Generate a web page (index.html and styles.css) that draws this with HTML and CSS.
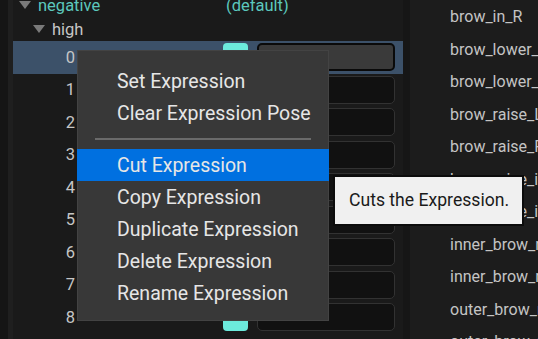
FILE: index.html
```html
<!DOCTYPE html>
<html>
<head>
<meta charset="utf-8">
<link rel="stylesheet" href="styles.css">
</head>
<body>
<div class="app">
  <div class="strip-a"></div>
  <div class="strip-b"></div>
  <div class="tree">
    <div class="head-row neg">
      <span class="tri tri-a"></span>
      <span class="neg-label">negative</span>
      <span class="neg-default">(default)</span>
    </div>
    <div class="head-row high">
      <span class="tri tri-b"></span>
      <span class="high-label">high</span>
    </div>
    <div class="row sel"><span class="num">0</span><span class="swatch"></span><span class="field"></span></div>
    <div class="row"><span class="num">1</span><span class="swatch"></span><span class="field"></span></div>
    <div class="row"><span class="num">2</span><span class="swatch"></span><span class="field"></span></div>
    <div class="row"><span class="num">3</span><span class="swatch"></span><span class="field"></span></div>
    <div class="row"><span class="num">4</span><span class="swatch"></span><span class="field"></span></div>
    <div class="row"><span class="num">5</span><span class="swatch"></span><span class="field"></span></div>
    <div class="row"><span class="num">6</span><span class="swatch"></span><span class="field"></span></div>
    <div class="row"><span class="num">7</span><span class="swatch"></span><span class="field"></span></div>
    <div class="row"><span class="num">8</span><span class="swatch"></span><span class="field"></span></div>
    <div class="head-row next"><span class="tri tri-c"></span></div>
  </div>
  <div class="divider"></div>
  <div class="list">
    <div class="item">brow_in_R</div>
    <div class="item">brow_lower_L</div>
    <div class="item">brow_lower_R</div>
    <div class="item">brow_raise_L</div>
    <div class="item">brow_raise_R</div>
    <div class="item">brow_raise_in_L</div>
    <div class="item">brow_raise_in_R</div>
    <div class="item">inner_brow_raise_L</div>
    <div class="item">inner_brow_raise_R</div>
    <div class="item">outer_brow_raise_L</div>
    <div class="item">outer_brow_raise_R</div>
  </div>

  <div class="menu">
    <div class="mi">Set Expression</div>
    <div class="mi">Clear Expression Pose</div>
    <div class="sep"></div>
    <div class="mi hot">Cut Expression</div>
    <div class="mi">Copy Expression</div>
    <div class="mi">Duplicate Expression</div>
    <div class="mi">Delete Expression</div>
    <div class="mi">Rename Expression</div>
  </div>
  <div class="tooltip">Cuts the Expression.</div>
</div>
</body>
</html>
```
FILE: styles.css
```css
html, body {
  margin: 0;
  padding: 0;
  background: #1a1a1a;
  overflow: hidden;
}
.app {
  position: relative;
  width: 538px;
  height: 339px;
  overflow: hidden;
  display: grid;
  grid-template-columns: 8px 5px 390px 7px 1fr;
  font-family: Roboto, "Noto Sans", sans-serif;
}
.strip-a { background: #151515; }
.strip-b { background: #1f1f1f; }
.tree {
  background: #1a1a1a;
  margin-top: -7px;
}
.head-row {
  height: 24px;
  display: flex;
  align-items: center;
  font-size: 16.5px;
}
.tri {
  width: 0;
  height: 0;
  border-left: 6px solid transparent;
  border-right: 6px solid transparent;
  border-top: 8px solid #7a7a7a;
}
.tri-a { margin-left: 6px; }
.tri-b { margin-left: 20px; }
.tri-c { margin-left: 20px; margin-top: 18px; }
.neg-label {
  color: #5cc8bd;
  margin-left: 7px;
  width: 188px;
}
.neg-default { color: #5cc8bd; }
.high-label {
  color: #c6c6c6;
  margin-left: 7px;
}
.row {
  height: 32.5px;
  display: flex;
  align-items: center;
  font-size: 16.5px;
  color: #c6c6c6;
}
.row.sel { background: #3c5169; }
.num {
  width: 62px;
  text-align: right;
  margin-right: 148px;
}
.swatch {
  width: 25px;
  height: 28px;
  border-radius: 4px;
  background: #6ceadc;
  margin-right: 9px;
}
.field {
  width: 138px;
  height: 28px;
  box-sizing: border-box;
  border-radius: 5px;
  background: #111111;
  border: 1px solid #323232;
}
.row.sel .field {
  background: #3a3a3a;
  border: 2px solid #0a0a0a;
}
.divider { background: #161616; }
.list {
  background: #1c1c1c;
  padding-top: 1px;
}
.item {
  height: 32.5px;
  line-height: 32.5px;
  padding-left: 40px;
  font-size: 16px;
  color: #c4c4c4;
  white-space: nowrap;
}
.menu {
  position: absolute;
  left: 77px;
  top: 50px;
  width: 252px;
  height: 271px;
  box-sizing: border-box;
  background: #383838;
  border: 1px solid #434343;
  padding-top: 14px;
}
.mi {
  height: 32px;
  line-height: 33px;
  padding-left: 39px;
  font-size: 19.5px;
  color: #e6e6e6;
  white-space: nowrap;
}
.mi.hot {
  background: #0070e0;
  margin: 0 -1px;
  padding-left: 40px;
}
.sep {
  height: 2px;
  background: #6a6a6a;
  margin: 9px 17px 9px 17px;
}
.tooltip {
  position: absolute;
  left: 333px;
  top: 175px;
  width: 191px;
  height: 51px;
  box-sizing: border-box;
  background: #f0f0f0;
  border: 2px solid #0c0c0c;
  padding-left: 14px;
  line-height: 47px;
  font-size: 17.6px;
  color: #1a1a1a;
  white-space: nowrap;
}
```
